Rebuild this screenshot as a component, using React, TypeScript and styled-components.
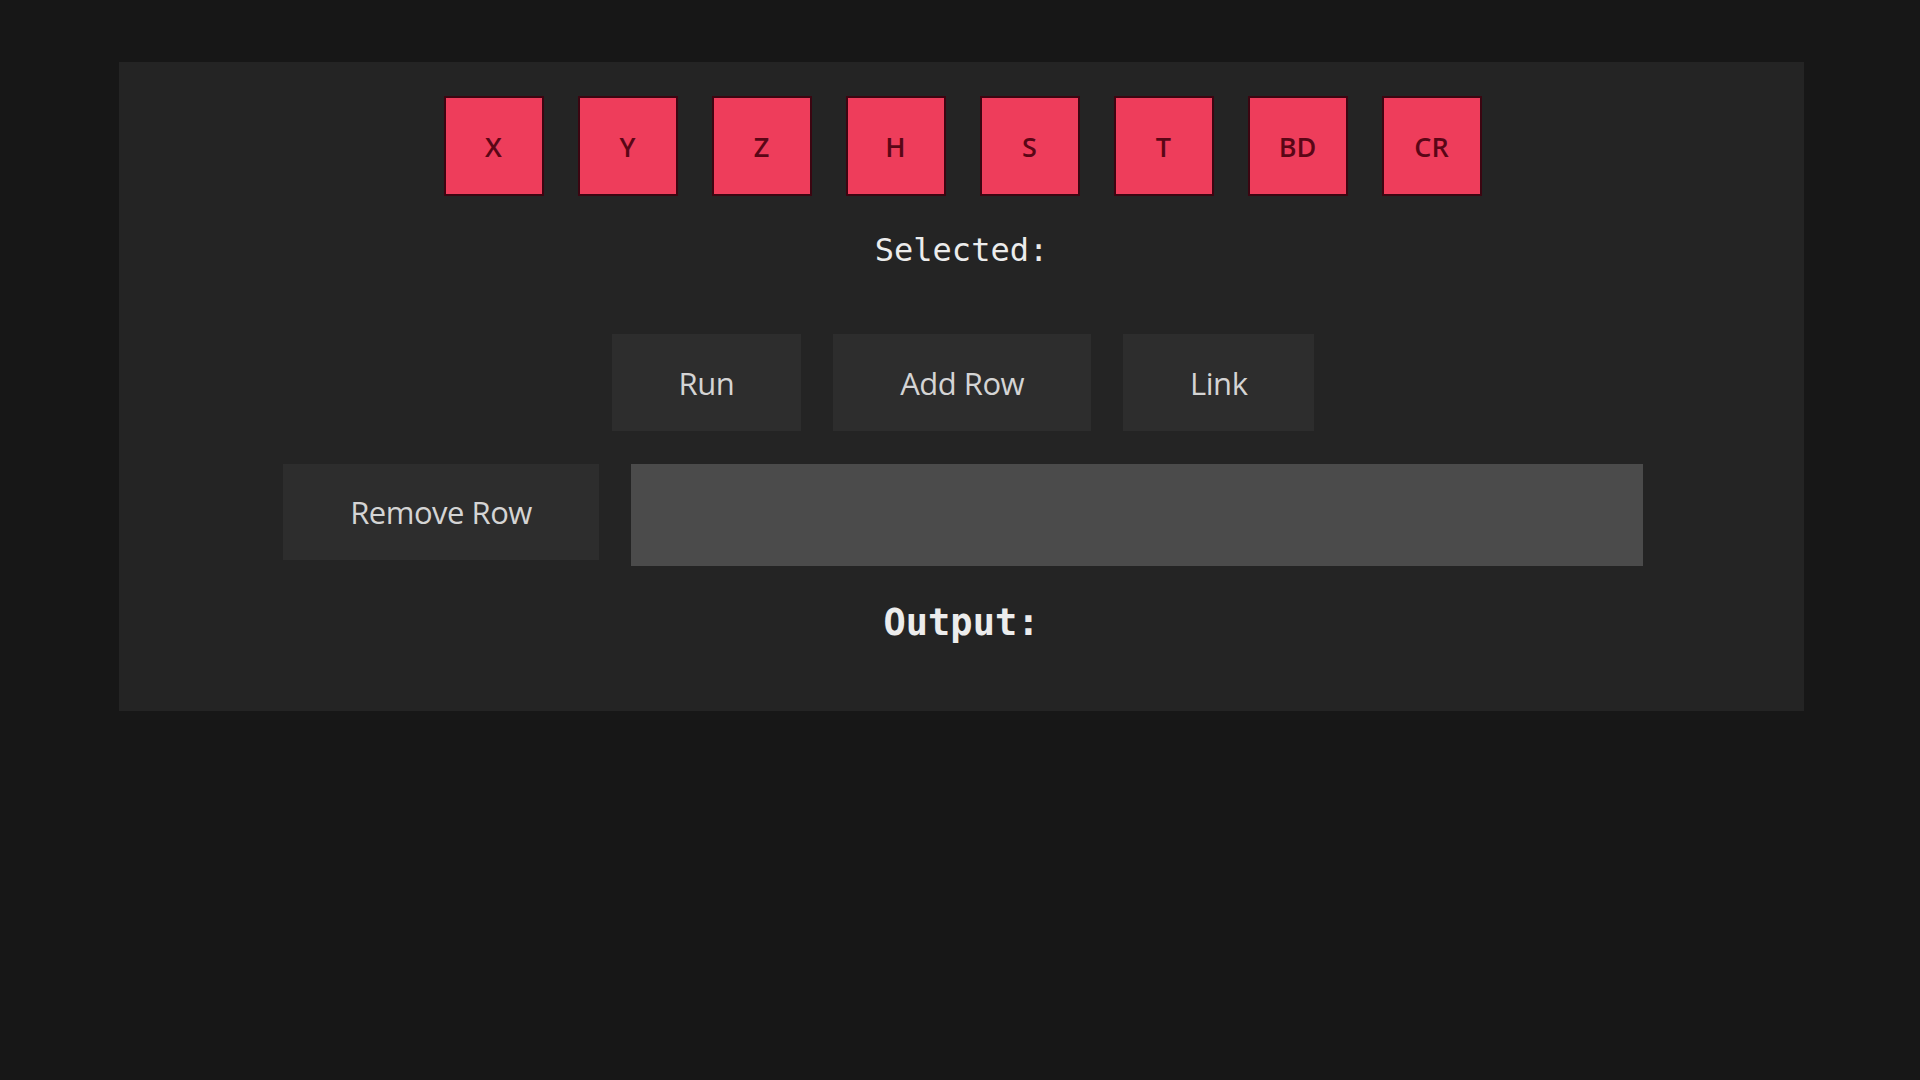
import styled, { createGlobalStyle } from "styled-components";

const GlobalStyle = createGlobalStyle`
  html, body {
    margin: 0;
    padding: 0;
    background: #171717;
    min-height: 100vh;
  }
`;

const Page = styled.div`
  padding: 62px 0 0 119px;
`;

const Panel = styled.div`
  width: 1685px;
  box-sizing: border-box;
  background: #242424;
  padding: 34px 0 67px;
  display: flex;
  flex-direction: column;
  align-items: center;
`;

const GateRow = styled.div`
  display: flex;
  gap: 34px;
  margin-left: 2px;
`;

const Gate = styled.button`
  width: 100px;
  height: 100px;
  box-sizing: border-box;
  border: 2px solid #3c0511;
  background: #ee3d5b;
  color: #5a0616;
  font-family: "Open Sans", "Noto Sans", sans-serif;
  font-weight: 600;
  font-size: 27px;
  padding: 0;
  display: flex;
  align-items: center;
  justify-content: center;
  cursor: pointer;
`;

const Heading = styled.div<{ $size: number; $bold?: boolean }>`
  font-family: "DejaVu Sans Mono", monospace;
  font-size: ${({ $size }) => $size}px;
  font-weight: ${({ $bold }) => ($bold ? 700 : 400)};
  line-height: 36px;
  color: #ececec;
`;

const Selected = styled(Heading)`
  margin-top: 36px;
`;

const Output = styled(Heading)`
  margin-top: 36px;
  line-height: 42px;
`;

const ActionRow = styled.div`
  display: flex;
  gap: 32px;
  margin-top: 66px;
  margin-left: 3px;
`;

const Action = styled.button`
  height: 97px;
  padding: 0 67px;
  border: none;
  background: #2d2d2d;
  color: #d4d4d4;
  font-family: "Open Sans", "Noto Sans", sans-serif;
  font-size: 31px;
  letter-spacing: -0.5px;
  cursor: pointer;
`;

const EditRow = styled.div`
  display: flex;
  align-items: flex-start;
  gap: 32px;
  margin-top: 33px;
  margin-left: 3px;
`;

const RemoveButton = styled(Action)`
  height: 96px;
`;

const CircuitInput = styled.input`
  width: 1012px;
  height: 102px;
  box-sizing: border-box;
  border: none;
  outline: none;
  background: #4b4b4b;
  color: #e0e0e0;
  font-family: "DejaVu Sans Mono", monospace;
  font-size: 28px;
  padding: 0 16px;
`;

const gates = ["X", "Y", "Z", "H", "S", "T", "BD", "CR"];

export default function App() {
  return (
    <>
      <GlobalStyle />
      <Page>
        <Panel>
          <GateRow>
            {gates.map((g) => (
              <Gate key={g}>{g}</Gate>
            ))}
          </GateRow>
          <Selected $size={32}>Selected:</Selected>
          <ActionRow>
            <Action>Run</Action>
            <Action>Add Row</Action>
            <Action>Link</Action>
          </ActionRow>
          <EditRow>
            <RemoveButton>Remove Row</RemoveButton>
            <CircuitInput />
          </EditRow>
          <Output $size={37} $bold>
            Output:
          </Output>
        </Panel>
      </Page>
    </>
  );
}
